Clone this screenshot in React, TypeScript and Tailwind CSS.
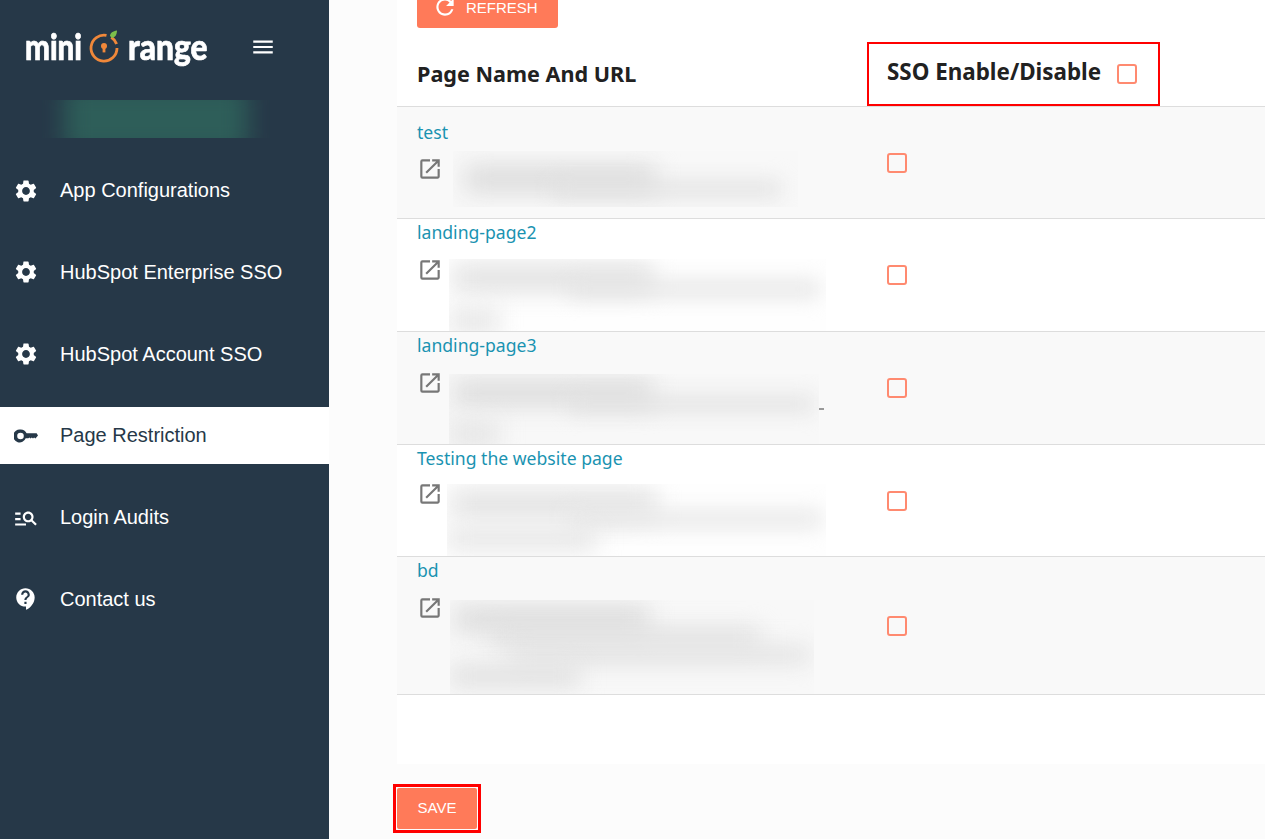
import { MdSettings, MdManageSearch, MdContactSupport, MdOpenInNew, MdRefresh, MdMenu } from "react-icons/md";
import type { ReactNode } from "react";

function KeyIcon() {
  return (
    <svg width="24" height="14" viewBox="0 0 24 14" className="shrink-0">
      <path
        fillRule="evenodd"
        d="M6.5.5a6.5 6.5 0 0 1 6.1 3.8H22.6L24 6.4l-2.6 3-1.3-1-1.1 1.1-1.2-1.1-1.2 1.1-1.2-1.1-1 .9h-2.7A6.5 6.5 0 1 1 6.5.5Zm0 3.2a3.3 3.3 0 1 0 0 6.6 3.3 3.3 0 0 0 0-6.6Z"
        fill="currentColor"
      />
    </svg>
  );
}

const navItems: { label: string; icon: ReactNode; active?: boolean }[] = [
  { label: "App Configurations", icon: <MdSettings size={26} /> },
  { label: "HubSpot Enterprise SSO", icon: <MdSettings size={26} /> },
  { label: "HubSpot Account SSO", icon: <MdSettings size={26} /> },
  { label: "Page Restriction", icon: <KeyIcon />, active: true },
  { label: "Login Audits", icon: <MdManageSearch size={26} /> },
  { label: "Contact us", icon: <MdContactSupport size={26} /> },
];

function Check() {
  return <span className="block w-5 h-5 shrink-0 rounded-[3px] border-2 border-[#ff8a70] bg-transparent" />;
}

function Bars({ bars }: { bars: string[] }) {
  return (
    <div className="flex flex-col">
      {bars.map((c, i) => (
        <div key={i} className={c} />
      ))}
    </div>
  );
}

const rows = [
  {
    name: "test", h: "h-[112px]", pt: "pt-[12px]", bg: "bg-[#f9f9f9]", iconGap: "mt-[12px]", ml: "ml-[10px] -mt-[6px]",
    box: "w-[345px] h-[56px] pt-[14px] bg-[#f8f8f8]",
    bars: [
      "ml-[12px] w-[190px] h-[28px] bg-[#dcdcdc] blur-[12px]",
      "-mt-[12px] ml-[100px] w-[228px] h-[16px] bg-[#e2e2e2] blur-[10px]",
    ],
  },
  {
    name: "landing-page2", h: "h-[113px]", pt: "pt-0", bg: "bg-white", iconGap: "mt-[13px]", ml: "ml-[6px] mt-px",
    box: "w-[377px] h-[72px] pt-[6px] bg-[#fefefe]",
    bars: [
      "ml-[4px] w-[200px] h-[26px] bg-[#e0e0e0] blur-[12px]",
      "-mt-[10px] ml-[120px] w-[250px] h-[16px] bg-[#e4e4e4] blur-[10px]",
      "mt-[10px] ml-0 w-[50px] h-[28px] bg-[#e8e8e8] blur-[11px]",
    ],
  },
  {
    name: "landing-page3", h: "h-[113px]", pt: "pt-0", bg: "bg-[#f9f9f9]", iconGap: "mt-[13px]", ml: "ml-[6px] mt-[3px]",
    box: "w-[370px] h-[70px] pt-[6px] bg-[#f8f8f8]",
    bars: [
      "ml-[4px] w-[200px] h-[26px] bg-[#dcdcdc] blur-[12px]",
      "-mt-[10px] ml-[120px] w-[245px] h-[16px] bg-[#e2e2e2] blur-[10px]",
      "mt-[8px] ml-0 w-[50px] h-[28px] bg-[#e6e6e6] blur-[11px]",
    ],
  },
  {
    name: "Testing the website page", h: "h-[112px]", pt: "pt-0", bg: "bg-white", iconGap: "mt-[11px]", ml: "ml-[4px] mt-[2px]",
    box: "w-[379px] h-[72px] pt-[6px] bg-[#fefefe]",
    bars: [
      "ml-[4px] w-[205px] h-[28px] bg-[#e2e2e2] blur-[12px]",
      "-mt-[8px] ml-[120px] w-[255px] h-[18px] bg-[#e8e8e8] blur-[10px]",
      "mt-[0px] ml-0 w-[150px] h-[22px] bg-[#e6e6e6] blur-[11px]",
    ],
  },
  {
    name: "bd", h: "h-[138px]", pt: "pt-0", bg: "bg-[#f9f9f9]", iconGap: "mt-[13px]", ml: "ml-[7px] mt-[4px]",
    box: "w-[364px] h-[94px] pt-[6px] bg-[#f8f8f8]",
    bars: [
      "ml-[4px] w-[195px] h-[26px] bg-[#dcdcdc] blur-[12px]",
      "-mt-[4px] ml-[40px] w-[270px] h-[18px] bg-[#e0e0e0] blur-[11px]",
      "ml-[60px] w-[300px] h-[18px] bg-[#e2e2e2] blur-[11px]",
      "ml-0 w-[130px] h-[24px] bg-[#e2e2e2] blur-[11px]",
    ],
  },
];

export default function App() {
  return (
    <div className="flex h-[839px] overflow-hidden bg-[#fcfcfc] font-['Liberation_Sans',Arial,sans-serif]">
      <aside className="w-[329px] shrink-0 bg-[#263848] text-white">
        <div className="flex items-center h-[100px] pl-[25px] pb-[6px]">
          <div className="flex items-center w-[183px] font-['Lato',sans-serif] font-black text-[36px] leading-none whitespace-nowrap [-webkit-text-stroke:0.7px_white]">
            <span className="inline-block w-[57px] -mt-[3px] origin-left scale-x-[0.82]">mini</span>
            <svg width="32" height="34" viewBox="0 0 32 34" className="ml-[6px] mr-[8px] shrink-0">
              <path d="M18.5 5.3 A13 13 0 1 0 29 18" fill="none" stroke="#f0883a" strokeWidth="2.8" />
              <path d="M23.2 7.2 A13 13 0 0 1 28.6 14" fill="none" stroke="#f0883a" strokeWidth="2.8" />
              <path d="M22 6 C22 3 25 1 29 0.5 C29 4 27.5 7.5 24 8 Z" fill="#7cbf4b" />
              <circle cx="16" cy="16" r="3" fill="#f0883a" />
              <rect x="14.6" y="16" width="2.8" height="6.4" fill="#f0883a" />
            </svg>
            <span className="inline-block w-[79px] -mt-[3px] origin-left scale-x-[0.88]">range</span>
          </div>
          <MdMenu size={26} className="ml-[42px] shrink-0" />
        </div>
        <div className="ml-[40px] w-[232px] h-[38px] overflow-hidden">
          <div className="mx-[24px] -mt-[16px] h-[70px] bg-[#2e5e59] blur-[12px]" />
        </div>
        <nav className="mt-[24px] flex flex-col gap-[24.8px]">
          {navItems.map((it) => (
            <div
              key={it.label}
              className={`flex items-center h-[57px] pl-[13px] text-[20px] ${it.active ? "bg-white text-[#263848]" : "text-white"}`}
            >
              <span className="w-[26px] flex justify-center shrink-0">{it.icon}</span>
              <span className="ml-[21px] -mt-[1px]">{it.label}</span>
            </div>
          ))}
        </nav>
      </aside>
      <main className="flex-1 min-w-0 pl-[64px] -mt-[12px]">
        <section className="ml-1 h-[776px] bg-white font-['Noto_Sans',sans-serif]">
          <div className="pl-5">
            <button className="flex items-center w-[141px] h-10 pl-[15px] rounded-[3px] bg-[#ff7a59] text-white text-[15px] leading-none font-['Liberation_Sans',Arial,sans-serif]">
              <MdRefresh size={26} className="-mt-[2px]" />
              <span className="ml-[8px] -mt-[2px]">REFRESH</span>
            </button>
          </div>
          <div className="mt-[14px] grid grid-cols-[470px_293px] h-[65px] border-b border-[#dddddd] text-[#212121] font-bold">
            <div className="pl-5 flex items-center text-[21.6px]">Page Name And URL</div>
            <div className="flex items-center pl-[18px] border-2 border-[#ff0000] h-[64px] text-[22.4px]">
              <span className="-mt-[4px]">SSO Enable/Disable</span>
              <span className="ml-[16px]"><Check /></span>
            </div>
          </div>
          {rows.map((r) => (
            <div key={r.name} className={`grid grid-cols-[470px_1fr] ${r.h} border-b border-[#dddddd] ${r.bg}`}>
              <div className={`pl-5 ${r.pt} overflow-hidden`}>
                <div className="text-[17.6px] leading-[26px] text-[#1a93b1]">{r.name}</div>
                <div className={`flex items-start ${r.iconGap}`}>
                  <MdOpenInNew size={26} className="shrink-0 -mt-[1px] text-[#777777]" />
                  <div className={`${r.ml} ${r.box} overflow-hidden`}>
                    <Bars bars={r.bars} />
                  </div>
                  {r.name === "landing-page3" && (
                    <span className="mt-[37px] block w-[5px] h-[2px] bg-[#999999]" />
                  )}
                </div>
              </div>
              <div className="flex items-center pl-5"><Check /></div>
            </div>
          ))}
        </section>
        <div className="mt-[20px] inline-block border-[3px] border-[#ff0000] p-px">
          <button className="block w-[80px] h-[41px] rounded-[2px] bg-[#ff7a59] text-white text-[15px]">SAVE</button>
        </div>
      </main>
    </div>
  );
}
